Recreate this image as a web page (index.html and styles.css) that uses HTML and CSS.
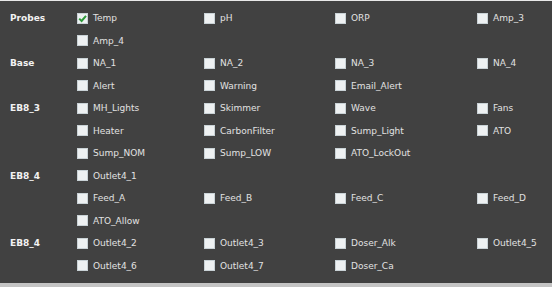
FILE: index.html
```html
<!DOCTYPE html>
<html>
<head>
<meta charset="utf-8">
<link rel="stylesheet" href="styles.css">
</head>
<body>
<div class="panel">
  <div class="grid">
    <div class="lbl">Probes</div>
    <div class="item"><span class="cb on"><svg viewBox="0 0 11 11" width="11" height="11"><path d="M2.2 5.6 L4.6 8 L9 2.8" fill="none" stroke="#2e9a3a" stroke-width="2"/></svg></span>Temp</div>
    <div class="item"><span class="cb"></span>pH</div>
    <div class="item"><span class="cb"></span>ORP</div>
    <div class="item"><span class="cb"></span>Amp_3</div>

    <div class="lbl"></div>
    <div class="item"><span class="cb"></span>Amp_4</div>
    <div></div><div></div><div></div>

    <div class="lbl">Base</div>
    <div class="item"><span class="cb"></span>NA_1</div>
    <div class="item"><span class="cb"></span>NA_2</div>
    <div class="item"><span class="cb"></span>NA_3</div>
    <div class="item"><span class="cb"></span>NA_4</div>

    <div class="lbl"></div>
    <div class="item"><span class="cb"></span>Alert</div>
    <div class="item"><span class="cb"></span>Warning</div>
    <div class="item"><span class="cb"></span>Email_Alert</div>
    <div></div>

    <div class="lbl">EB8_3</div>
    <div class="item"><span class="cb"></span>MH_Lights</div>
    <div class="item"><span class="cb"></span>Skimmer</div>
    <div class="item"><span class="cb"></span>Wave</div>
    <div class="item"><span class="cb"></span>Fans</div>

    <div class="lbl"></div>
    <div class="item"><span class="cb"></span>Heater</div>
    <div class="item"><span class="cb"></span>CarbonFilter</div>
    <div class="item"><span class="cb"></span>Sump_Light</div>
    <div class="item"><span class="cb"></span>ATO</div>

    <div class="lbl"></div>
    <div class="item"><span class="cb"></span>Sump_NOM</div>
    <div class="item"><span class="cb"></span>Sump_LOW</div>
    <div class="item"><span class="cb"></span>ATO_LockOut</div>
    <div></div>

    <div class="lbl">EB8_4</div>
    <div class="item"><span class="cb"></span>Outlet4_1</div>
    <div></div><div></div><div></div>

    <div class="lbl"></div>
    <div class="item"><span class="cb"></span>Feed_A</div>
    <div class="item"><span class="cb"></span>Feed_B</div>
    <div class="item"><span class="cb"></span>Feed_C</div>
    <div class="item"><span class="cb"></span>Feed_D</div>

    <div class="lbl"></div>
    <div class="item"><span class="cb"></span>ATO_Allow</div>
    <div></div><div></div><div></div>

    <div class="lbl">EB8_4</div>
    <div class="item"><span class="cb"></span>Outlet4_2</div>
    <div class="item"><span class="cb"></span>Outlet4_3</div>
    <div class="item"><span class="cb"></span>Doser_Alk</div>
    <div class="item"><span class="cb"></span>Outlet4_5</div>

    <div class="lbl"></div>
    <div class="item"><span class="cb"></span>Outlet4_6</div>
    <div class="item"><span class="cb"></span>Outlet4_7</div>
    <div class="item"><span class="cb"></span>Doser_Ca</div>
    <div></div>
  </div>
</div>
</body>
</html>
```
FILE: styles.css
```css
html, body {
  margin: 0;
  padding: 0;
  background: #c4c4c4;
}
body {
  font-family: "DejaVu Sans", Verdana, sans-serif;
  font-size: 9px;
  width: 552px;
  height: 287px;
  overflow: hidden;
}
.panel {
  background: #414141;
  border-top: 1px solid #e8e8e8;
  height: 283px;
  box-sizing: border-box;
  padding-top: 6px;
}
.grid {
  display: grid;
  grid-template-columns: 77px 127px 131px 142px 1fr;
  grid-auto-rows: 22.5px;
}
.lbl {
  color: #f2f2f2;
  font-weight: bold;
  padding-left: 10px;
  display: flex;
  align-items: center;
}
.item {
  color: #e2e2e2;
  display: flex;
  align-items: center;
  gap: 5px;
  white-space: nowrap;
}
.cb {
  width: 11px;
  height: 11px;
  box-sizing: border-box;
  background: #eef1f2;
  border: 1px solid #c9d2d6;
  display: inline-block;
  flex: none;
  position: relative;
}
.cb svg {
  position: absolute;
  left: -1px;
  top: -1px;
}
```
